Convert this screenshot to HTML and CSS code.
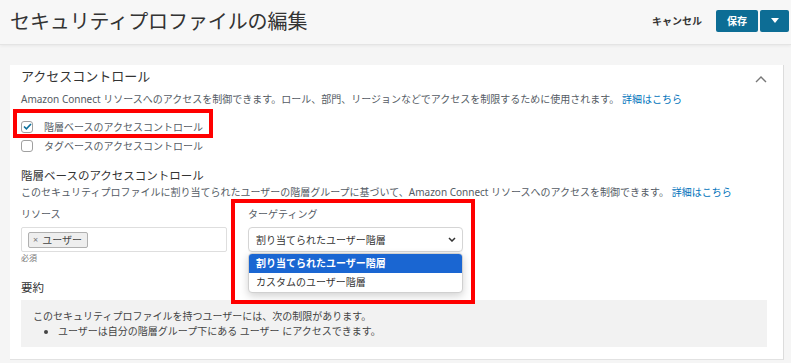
FILE: index.html
```html
<!DOCTYPE html>
<html lang="ja">
<head>
    <meta charset="UTF-8">
    <title>セキュリティプロファイルの編集</title>
    <link rel="stylesheet" href="styles.css">
</head>
<body>
    <header class="page-header">
        <h1>セキュリティプロファイルの編集</h1>
        <div class="actions">
            <button class="btn-link">キャンセル</button>
            <div class="split-btn">
                <button class="btn-primary">保存</button>
                <button class="btn-primary btn-caret">
                    <svg width="8" height="5" viewBox="0 0 8 5"><path d="M0 0h8L4 5z" fill="#fff"/></svg>
                </button>
            </div>
        </div>
    </header>

    <main class="content">
        <section class="card">
            <div class="card-head">
                <h2>アクセスコントロール</h2>
                <svg class="collapse" width="12" height="7" viewBox="0 0 12 7"><path d="M1 6l5-5 5 5" fill="none" stroke="#777" stroke-width="1.4"/></svg>
            </div>
            <p class="desc">Amazon Connect リソースへのアクセスを制御できます。ロール、部門、リージョンなどでアクセスを制限するために使用されます。 <a href="#">詳細はこちら</a></p>

            <div class="checks">
                <label class="check highlight">
                    <span class="box checked">
                        <svg width="9" height="7" viewBox="0 0 9 7"><path d="M1 3.5l2.4 2.3L8 1" fill="none" stroke="#0b6f9b" stroke-width="1.6"/></svg>
                    </span>
                    階層ベースのアクセスコントロール
                </label>
                <label class="check">
                    <span class="box"></span>
                    タグベースのアクセスコントロール
                </label>
            </div>

            <h3>階層ベースのアクセスコントロール</h3>
            <p class="desc tight">このセキュリティプロファイルに割り当てられたユーザーの階層グループに基づいて、Amazon Connect リソースへのアクセスを制御できます。 <a href="#">詳細はこちら</a></p>

            <div class="fields">
                <div class="field">
                    <div class="field-label">リソース</div>
                    <div class="multi">
                        <span class="tag"><span class="tag-x">×</span>ユーザー</span>
                    </div>
                    <div class="hint">必須</div>
                </div>
                <div class="field target">
                    <div class="field-label">ターゲティング</div>
                    <div class="select">
                        <span>割り当てられたユーザー階層</span>
                        <svg width="8" height="5" viewBox="0 0 8 5"><path d="M1 1l3 3 3-3" fill="none" stroke="#333" stroke-width="1.5"/></svg>
                    </div>
                    <ul class="dropdown">
                        <li class="active">割り当てられたユーザー階層</li>
                        <li>カスタムのユーザー階層</li>
                    </ul>
                    <div class="mark"></div>
                </div>
            </div>

            <h3 class="summary-title">要約</h3>
            <div class="summary">
                <p>このセキュリティプロファイルを持つユーザーには、次の制限があります。</p>
                <ul>
                    <li>ユーザーは自分の階層グループ下にある ユーザー にアクセスできます。</li>
                </ul>
            </div>
        </section>
    </main>
</body>
</html>
```

FILE: styles.css
```css
body {
    margin: 0;
    background-color: #f5f5f5;
    font-family: "Noto Sans", "Noto Sans CJK JP", sans-serif;
    color: #545b64;
    font-size: 10px;
}

.page-header {
    height: 44px;
    display: flex;
    align-items: center;
    justify-content: space-between;
    padding: 0 2px 0 10px;
    background-color: #f7f7f7;
    border-bottom: 1px solid #e4e4e4;
    box-shadow: 0 1px 3px rgba(0,0,0,0.06);
}

.page-header h1 {
    margin: -3px 0 0;
    font-size: 20px;
    font-weight: 400;
    color: #333;
    letter-spacing: -0.1px;
}

.actions {
    display: flex;
    align-items: center;
    margin-top: -3px;
}

.btn-link {
    background: none;
    border: none;
    font-family: inherit;
    font-size: 10px;
    font-weight: 700;
    color: #333;
    margin-right: 14px;
    padding: 0;
}

.split-btn {
    display: flex;
    gap: 2px;
}

.btn-primary {
    height: 22px;
    background-color: #0d6d95;
    color: white;
    border: none;
    border-radius: 2px;
    font-family: inherit;
    font-size: 10px;
    font-weight: 700;
    padding: 0 11px;
}

.btn-caret {
    width: 29px;
    padding: 0;
    display: flex;
    align-items: center;
    justify-content: center;
}

.content {
    padding: 20px 7px 0 10px;
}

.card {
    background-color: white;
    border-right: 1px solid #dcdcdc;
    border-bottom: 1px solid #e2e2e2;
    padding: 1px 16px 12px 11px;
}

.card-head {
    display: flex;
    align-items: center;
    justify-content: space-between;
}

.card-head h2 {
    margin: 0;
    font-size: 13px;
    line-height: 20px;
    font-weight: 400;
    color: #333;
}

.collapse {
    margin-top: 6px;
}

.desc {
    margin: 6px 0 0;
    line-height: 14px;
    white-space: nowrap;
}

.desc.tight {
    margin-top: 1px;
}

.desc a {
    color: #0073bb;
    text-decoration: none;
}

.checks {
    margin-top: 11px;
}

.check {
    display: flex;
    align-items: center;
    width: max-content;
    height: 19px;
    position: relative;
}

.box {
    width: 10px;
    height: 10px;
    border: 1px solid #a0a0a0;
    border-radius: 3px;
    margin-right: 11px;
    display: flex;
    align-items: center;
    justify-content: center;
}

.highlight::after {
    content: "";
    position: absolute;
    left: -8px;
    right: -10px;
    top: -8px;
    bottom: -2px;
    border: 4px solid #ff0000;
}

h3 {
    margin: 13px 0 0;
    font-size: 11.5px;
    line-height: 16px;
    font-weight: 400;
    color: #333;
}

.fields {
    display: grid;
    grid-template-columns: 206px 215px;
    gap: 21px;
    margin-top: 8px;
}

.field {
    position: relative;
}

.field-label {
    line-height: 14px;
    margin-bottom: 6px;
}

.multi, .select {
    height: 25px;
    box-sizing: border-box;
    border: 1px solid #dedede;
    border-radius: 4px;
    display: flex;
    align-items: center;
}

.multi {
    border-radius: 2px;
    padding-left: 6px;
}

.tag {
    display: flex;
    align-items: center;
    height: 16px;
    box-sizing: border-box;
    padding: 0 5px 0 4px;
    background-color: #eeeeee;
    border: 1px solid #b0b0b0;
    border-radius: 2px;
    color: #444;
}

.tag-x {
    font-size: 9px;
    color: #777;
    margin-right: 4px;
}

.hint {
    font-size: 8px;
    line-height: 12px;
    color: #777;
}

.select {
    justify-content: space-between;
    padding: 0 6px 0 7px;
    border-color: #d5d5d5;
    color: #333;
    box-shadow: 0 1px 1px rgba(0,0,0,0.05);
}

.dropdown {
    position: absolute;
    left: 0;
    right: 0;
    top: 46px;
    margin: 0;
    padding: 0;
    list-style: none;
    background-color: white;
    border: 1px solid #d0d0d0;
    border-radius: 4px;
    box-shadow: 0 3px 8px rgba(0,0,0,0.18);
    overflow: hidden;
    color: #333;
    z-index: 2;
}

.dropdown li {
    height: 19px;
    line-height: 19px;
    padding-left: 7px;
}

.dropdown li.active {
    background-color: #1a66d2;
    color: white;
    font-weight: 700;
}

.mark {
    position: absolute;
    left: -17px;
    right: -12px;
    top: -8px;
    height: 105px;
    box-sizing: border-box;
    border: 4px solid #ff0000;
    z-index: 3;
}

.summary-title {
    margin-top: 16px;
}

.summary {
    margin-top: 4px;
    background-color: #f2f2f2;
    padding: 9px 12px 8px;
    line-height: 15px;
    color: #444;
}

.summary p {
    margin: 0;
}

.summary ul {
    margin: 0;
    padding-left: 25px;
}
```
